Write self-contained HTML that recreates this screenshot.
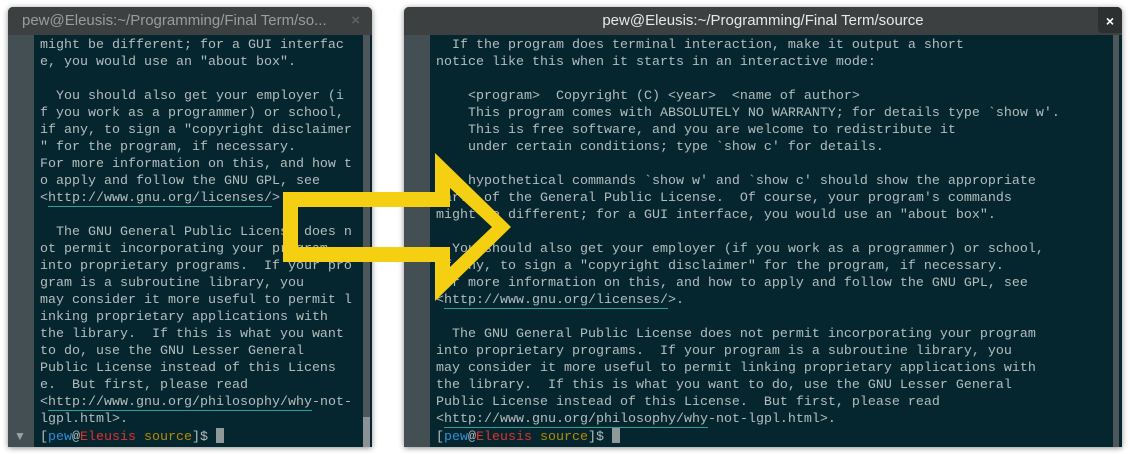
<!DOCTYPE html>
<html><head><style>
*{margin:0;padding:0;box-sizing:border-box}
body{width:1130px;height:454px;background:#fff;position:relative;overflow:hidden;font-family:"Liberation Sans",sans-serif}
.win{position:absolute;background:#06262f;border-radius:5px 5px 0 0;box-shadow:0 1px 6px rgba(0,0,0,.45);overflow:hidden}
.tb{position:absolute;left:0;right:0;top:0;height:28px;background:#3c4041;color:#d9d9d9;font-size:15px;line-height:28px}
.gut{position:absolute;left:0;top:28px;bottom:0;width:26px;background:#434f53}
.sb{position:absolute;top:28px;bottom:0;width:7px;background:#4d5658}
.th{position:absolute;bottom:0;left:0;right:0;height:30px;background:#8b9293}
pre{position:absolute;top:30px;font-family:"Liberation Mono",monospace;font-size:13.33px;line-height:17px;color:#b3bdbd}
.u{border-bottom:1px solid #2aa198;text-decoration:none}
.b{color:#2f8fd5}.r{color:#e0302c}.y{color:#b58900}
.cur{display:inline-block;width:8px;height:15px;background:#8f9999;vertical-align:-3px}
</style></head><body>
<div class="win" style="left:8px;top:7px;width:364px;height:440px">
<div class="tb" style="padding-left:14px;color:#9a9d9d">pew@Eleusis:~/Programming/Final Term/so...<span style="position:absolute;right:12px;color:#5d6162;font-weight:bold">×</span></div>
<div class="gut"><span style="position:absolute;left:6px;bottom:4px;color:#9aa3a4;font-size:12px">▼</span></div>
<div class="sb" style="left:355px"><div class="th"></div></div>
<pre style="left:32px">might be different; for a GUI interfac
e, you would use an "about box".

  You should also get your employer (i
f you work as a programmer) or school,
if any, to sign a "copyright disclaimer
" for the program, if necessary.
For more information on this, and how t
o apply and follow the GNU GPL, see
&lt;<span class="u">http://www.gnu.org/licenses/</span>&gt;.

  The GNU General Public License does n
ot permit incorporating your program
into proprietary programs.  If your pro
gram is a subroutine library, you
may consider it more useful to permit l
inking proprietary applications with
the library.  If this is what you want
to do, use the GNU Lesser General
Public License instead of this Licens
e.  But first, please read
&lt;<span class="u">http://www.gnu.org/philosophy/why</span>-not-
lgpl.html&gt;.
[<span class="b">pew</span>@<span class="r">Eleusis</span> <span class="y">source</span>]$ <span class="cur"></span></pre>
</div>
<div class="win" style="left:404px;top:7px;width:718px;height:440px">
<div class="tb" style="text-align:center;color:#e8e8e8">pew@Eleusis:~/Programming/Final Term/source<span style="position:absolute;right:0;top:0;width:24px;height:26px;background:#2d3031;color:#fff;font-weight:bold;font-size:14px;text-align:center;border-radius:0 5px 0 4px">×</span></div>
<div class="gut"></div>
<div class="sb" style="left:709px;width:6px"><div class="th" style="height:0"></div></div>
<pre style="left:32px">  If the program does terminal interaction, make it output a short
notice like this when it starts in an interactive mode:

    &lt;program&gt;  Copyright (C) &lt;year&gt;  &lt;name of author&gt;
    This program comes with ABSOLUTELY NO WARRANTY; for details type `show w'.
    This is free software, and you are welcome to redistribute it
    under certain conditions; type `show c' for details.

The hypothetical commands `show w' and `show c' should show the appropriate
parts of the General Public License.  Of course, your program's commands
might be different; for a GUI interface, you would use an "about box".

  You should also get your employer (if you work as a programmer) or school,
if any, to sign a "copyright disclaimer" for the program, if necessary.
For more information on this, and how to apply and follow the GNU GPL, see
&lt;<span class="u">http://www.gnu.org/licenses/</span>&gt;.

  The GNU General Public License does not permit incorporating your program
into proprietary programs.  If your program is a subroutine library, you
may consider it more useful to permit linking proprietary applications with
the library.  If this is what you want to do, use the GNU Lesser General
Public License instead of this License.  But first, please read
&lt;<span class="u">http://www.gnu.org/philosophy/why</span>-not-lgpl.html&gt;.
[<span class="b">pew</span>@<span class="r">Eleusis</span> <span class="y">source</span>]$ <span class="cur"></span></pre>
</div>
<svg style="position:absolute;left:0;top:0" width="1130" height="454">
<path fill="#f4cf12" fill-rule="evenodd" d="M283 192 L435 192 L435 153 L511 227 L435 301 L435 262 L283 262 Z M298 207 L450 207 L450 188 L492 227 L450 267 L450 247 L298 247 Z"/>
</svg>
</body></html>
